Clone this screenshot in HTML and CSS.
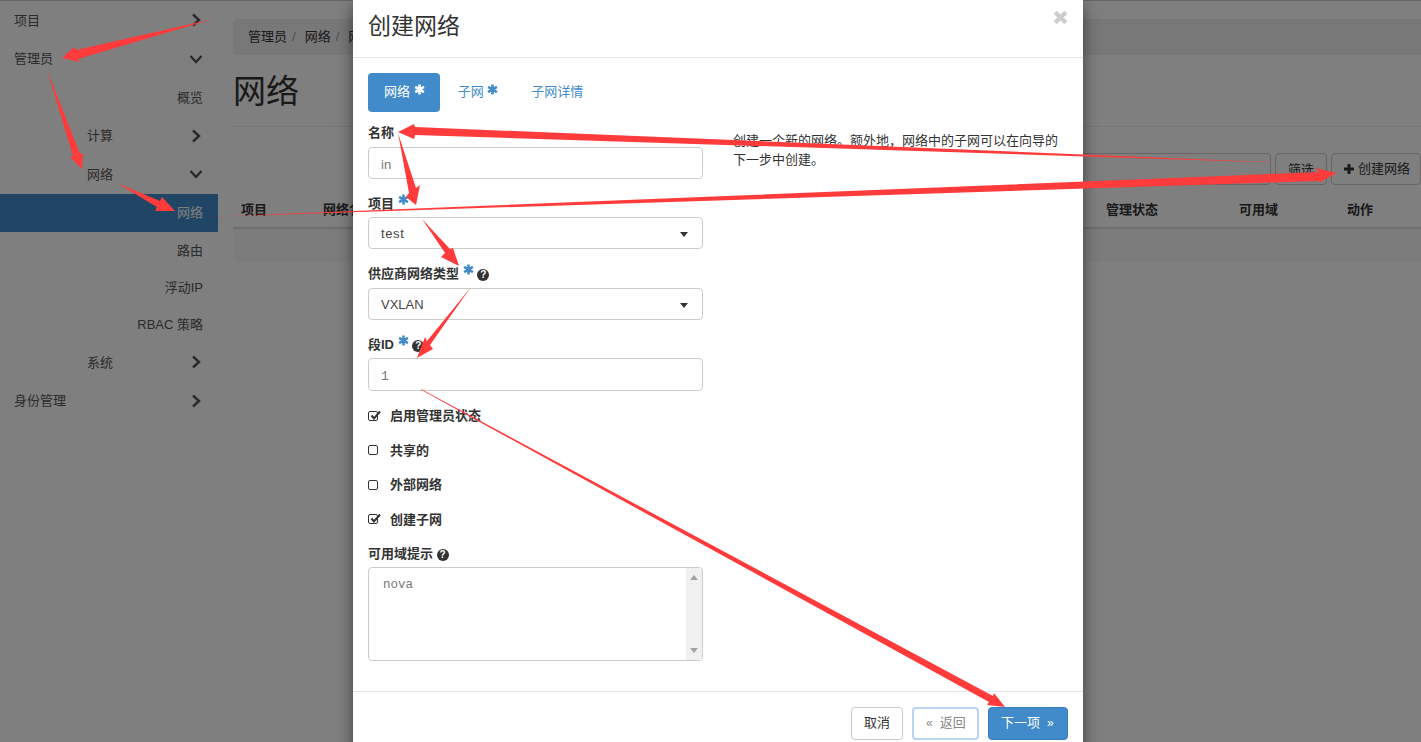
FILE: index.html
```html
<!DOCTYPE html>
<html lang="zh">
<head>
<meta charset="utf-8">
<title>创建网络</title>
<link rel="stylesheet" href="styles.css">
</head>
<body>
<svg width="0" height="0" class="defs">
  <defs>
    <symbol id="star" viewBox="0 0 12 12"><path d="M6 .5v11M1.200 3.200l9.600 5.600M10.800 3.200L1.200 8.800" fill="none" stroke="currentColor" stroke-width="2.800"/></symbol>
    <symbol id="right" viewBox="0 0 12 14"><path d="M3 1.500L9 7l-6 5.500" fill="none" stroke="currentColor" stroke-width="2.400"/></symbol>
    <symbol id="down" viewBox="0 0 14 12"><path d="M1.500 3L7 9l5.500-6" fill="none" stroke="currentColor" stroke-width="2.400"/></symbol>
  </defs>
</svg>
<div class="page">
  <nav class="sidebar">
    <div class="nav-row"><span>项目</span><svg class="chev"><use href="#right"/></svg></div>
    <div class="nav-row"><span>管理员</span><svg class="chev"><use href="#down"/></svg></div>
    <div class="nav-row leaf"><span>概览</span></div>
    <div class="nav-row sub"><span>计算</span><svg class="chev"><use href="#right"/></svg></div>
    <div class="nav-row sub"><span>网络</span><svg class="chev"><use href="#down"/></svg></div>
    <div class="nav-row leaf active"><span>网络</span></div>
    <div class="nav-row leaf tight"><span>路由</span></div>
    <div class="nav-row leaf tight"><span>浮动IP</span></div>
    <div class="nav-row leaf tight"><span>RBAC 策略</span></div>
    <div class="nav-row sub"><span>系统</span><svg class="chev"><use href="#right"/></svg></div>
    <div class="nav-row"><span>身份管理</span><svg class="chev"><use href="#right"/></svg></div>
  </nav>
  <main class="main">
    <div class="crumbs"><span>管理员</span><i>/</i><span>网络</span><i>/</i><span>网络</span></div>
    <h1 class="page-title">网络</h1>
    <div class="toolbar">
      <div class="filter-input"></div>
      <div class="btn-bg">筛选</div>
      <div class="btn-bg create"><svg class="plus" viewBox="0 0 10 10"><path d="M5 0v10M0 5h10" fill="none" stroke="#333" stroke-width="3"/></svg>创建网络</div>
    </div>
    <div class="thead">
      <span>项目</span><span>网络名称</span><span>管理状态</span><span>可用域</span><span>动作</span>
    </div>
    <div class="tbody-row"></div>
  </main>
</div>
<div class="backdrop"></div>
<section class="modal">
  <header class="modal-head">
    <h2>创建网络</h2>
    <svg class="close" viewBox="0 0 14 14"><path d="M2 2l10 10M12 2L2 12" fill="none" stroke="#ccc" stroke-width="4"/></svg>
  </header>
  <div class="modal-body">
    <div class="tabs">
      <div class="tab on">网络 <svg class="star"><use href="#star"/></svg></div>
      <div class="tab">子网 <svg class="star"><use href="#star"/></svg></div>
      <div class="tab">子网详情</div>
    </div>
    <div class="columns">
      <form class="form">
        <div class="group">
          <div class="label">名称</div>
          <input class="field" value="in">
        </div>
        <div class="group">
          <div class="label">项目 <svg class="star"><use href="#star"/></svg></div>
          <div class="field select"><span class="spaced">test</span><i class="caret"></i></div>
        </div>
        <div class="group">
          <div class="label">供应商网络类型 <svg class="star"><use href="#star"/></svg> <span class="help">?</span></div>
          <div class="field select"><span>VXLAN</span><i class="caret"></i></div>
        </div>
        <div class="group">
          <div class="label">段ID <svg class="star"><use href="#star"/></svg> <span class="help">?</span></div>
          <input class="field tall mono" value="1">
        </div>
        <div class="check first"><span class="box"><svg viewBox="0 0 12 12"><path d="M2.500 5.500l2.500 3L11 1.500" fill="none" stroke="#333" stroke-width="2"/></svg></span><span class="check-text">启用管理员状态</span></div>
        <div class="check"><span class="box"></span><span class="check-text">共享的</span></div>
        <div class="check"><span class="box"></span><span class="check-text">外部网络</span></div>
        <div class="check final"><span class="box"><svg viewBox="0 0 12 12"><path d="M2.500 5.500l2.500 3L11 1.500" fill="none" stroke="#333" stroke-width="2"/></svg></span><span class="check-text">创建子网</span></div>
        <div class="group">
          <div class="label">可用域提示 <span class="help">?</span></div>
          <div class="textarea">
            <div class="ta-text">nova</div>
            <div class="scroll"><i class="up"></i><i class="dn"></i></div>
          </div>
        </div>
      </form>
      <p class="desc">创建一个新的网络。额外地&#65292;网络中的子网可以在向导的下一步中创建。</p>
    </div>
  </div>
  <footer class="modal-foot">
    <div class="btn">取消</div>
    <div class="btn back"><small>«</small>返回</div>
    <div class="btn primary">下一项<small>»</small></div>
  </footer>
</section>
<svg class="arrows" viewBox="0 0 1421 742" width="1421" height="742">
  <g fill="#ff3b3b">
    <polygon points="213,19 76,50 74,47 62,58 79,62 78,59"/>
    <polygon points="47,70 73,156 70,157 82,169 83,153 80,154"/>
    <polygon points="117,183 160,201 162,197 175,211 155,211 157,207"/>
    <polygon points="204,217 1319,172 1315,168 1337,173 1318,183 1319,181"/>
    <polygon points="1290,163 415,127 414,124 398,132 414,139 415,135"/>
    <polygon points="398,133 409,193 406,197 416,205 420,185 416,188"/>
    <polygon points="422,219 445,253 441,257 459,266 453,248 450,249"/>
    <polygon points="471,287 427,341 425,337 417,358 433,349 430,345"/>
    <polygon points="421,389 421,389.800 989,702 987,705 1005,707 994,693 993,696"/>
  </g>
</svg>
</body>
</html>
```
FILE: styles.css
```css
* { box-sizing: border-box; }
html, body { margin: 0; height: 742px; overflow: hidden; }
body {
  position: relative;
  background: #fff;
  color: #333;
  font: 13px/18.57px "Liberation Sans", "Noto Sans CJK SC", sans-serif;
}
.defs { position: absolute; }
.page { display: flex; height: 742px; border-top: 1px solid #ccc; }

.sidebar { width: 218px; flex: none; color: #555; }
.nav-row {
  height: 38.500px;
  display: flex;
  align-items: center;
  padding: 0 15px 0 14px;
}
.nav-row span { flex: 1; padding-top: 2px; }
.nav-row.sub { padding-left: 87px; }
.nav-row.leaf span { text-align: right; }
.nav-row.tight { height: 37px; }
.nav-row.active { background: #428bca; color: #fff; }
.chev { width: 14px; height: 14px; flex: none; }

.main { flex: 1; min-width: 0; padding: 18px 0 0 15px; }
.crumbs {
  height: 36px;
  display: flex;
  align-items: center;
  gap: 5px;
  padding-left: 15px;
  background: #f1f1f1;
  border-radius: 4px 0 0 4px;
}
.crumbs i { color: #999; font-style: normal; margin-right: 4px; }
.page-title {
  margin: 17px 0 0;
  height: 55px;
  line-height: 40px;
  font-size: 33px;
  font-weight: 400;
  border-bottom: 1px solid #eee;
}
.toolbar { margin-top: 26px; display: flex; justify-content: flex-end; gap: 4px; height: 32px; }
.filter-input { width: 400px; flex: none; border: 1px solid #ccc; border-radius: 4px; }
.btn-bg {
  border: 1px solid #ccc;
  border-radius: 4px;
  padding: 7px 12px 0;
  white-space: nowrap;
  background: #fff;
}
.create { width: 90px; flex: none; padding-right: 0; padding-top: 0; display: flex; align-items: center; gap: 4px; }
.plus { width: 10px; height: 10px; flex: none; }
.thead {
  margin-top: 7px;
  height: 37px;
  padding-top: 9px;
  display: grid;
  grid-template-columns: 82px 783px 133px 108px 82px;
  border-bottom: 2px solid #ddd;
  font-weight: 700;
}
.thead span { padding-left: 8px; }
.tbody-row { height: 33px; background: #f9f9f9; border-radius: 0 0 0 4px; }

.backdrop { position: absolute; inset: 0; background: rgba(0, 0, 0, .5); }

.modal {
  position: absolute;
  top: 0;
  left: 353px;
  width: 730px;
  background: #fff;
  box-shadow: 0 5px 15px rgba(0, 0, 0, .5);
}
.modal-head {
  height: 58px;
  padding: 0 15px;
  display: flex;
  align-items: flex-start;
  justify-content: space-between;
  border-bottom: 1px solid #e5e5e5;
}
.modal-head h2 { margin: 10px 0 0; font-size: 23px; line-height: 32px; font-weight: 400; }
.close { width: 15px; height: 15px; margin-top: 10px; }
.modal-body { padding: 15px; }
.tabs { display: flex; gap: 2px; height: 39px; color: #428bca; }
.tab { padding: 10px 16px 0; border-radius: 4px; white-space: nowrap; }
.tab.on { background: #428bca; color: #fff; }
.star { width: 11px; height: 11px; vertical-align: top; color: #428bca; }
.tab .star { color: inherit; margin-right: -1px; margin-top: 1px; }
.columns { display: flex; gap: 30px; margin-top: 11px; }
.form { width: 335px; flex: none; }
.desc { margin: 9px 0 0; width: 330px; }
.group { margin-bottom: 15px; }
.label { margin-bottom: 5px; font-weight: 700; height: 18.570px; white-space: nowrap; line-height: 20.570px; }
.help {
  display: inline-block;
  width: 12px;
  height: 12px;
  border-radius: 50%;
  background: #333;
  color: #fff;
  font-size: 10px;
  line-height: 12px;
  text-align: center;
}
.field {
  display: block;
  width: 335px;
  height: 32px;
  padding: 3px 12px 0;
  border: 1px solid #ccc;
  border-radius: 4px;
  background: #fff;
  color: #555;
  font: inherit;
}
input.field { color: #777; outline: none; }
.field.tall { height: 33px; }
.field.mono { font-family: "Liberation Mono", monospace; }
.select { display: flex; align-items: center; justify-content: space-between; color: #444; }
.spaced { letter-spacing: .6px; }
.caret {
  width: 0;
  height: 0;
  border: 4.500px solid transparent;
  border-top: 5px solid #333;
  border-bottom: 0;
  margin-right: 2px;
}
.check {
  display: flex;
  align-items: center;
  height: 18.570px;
  margin-bottom: 16px;
  font-weight: 700;
}
.check-text { padding-top: 2px; }
.check.first { margin-top: 1px; }
.check.final { margin-bottom: 15px; }
.box {
  width: 10px;
  height: 10px;
  margin-right: 12px;
  border: 1px solid #333;
  border-radius: 2px;
  flex: none;
}
.box svg { display: block; width: 12px; height: 12px; margin-top: -2px; overflow: visible; }
.textarea {
  width: 335px;
  height: 94px;
  display: flex;
  border: 1px solid #ccc;
  border-radius: 4px;
  overflow: hidden;
}
.ta-text { flex: 1; padding: 8px 14px; font-family: "Liberation Mono", monospace; font-size: 12.500px; color: #777; }
.scroll {
  width: 16px;
  background: #f0f0f0;
  display: flex;
  flex-direction: column;
  align-items: center;
  justify-content: space-between;
  padding: 7px 0;
}
.up, .dn { width: 0; height: 0; border: 4px solid transparent; }
.up { border-top: 0; border-bottom: 5px solid #a3a3a3; }
.dn { border-bottom: 0; border-top: 5px solid #a3a3a3; }
.modal-foot {
  height: 64px;
  padding: 15px 15px 0;
  display: flex;
  justify-content: flex-end;
  gap: 9px;
  border-top: 1px solid #e5e5e5;
}
.btn {
  height: 33px;
  padding: 6px 12px;
  border: 1px solid #ccc;
  border-radius: 4px;
  white-space: nowrap;
  background: #fff;
  color: #333;
}
.btn small { font-size: 12px; }
.back {
  width: 67px;
  border: 2px solid #b9d3f3;
  color: #888;
  padding-top: 5px;
}
.back small { margin-right: 7px; }
.primary { width: 80px; background: #428bca; border-color: #357ebd; color: #fff; }
.primary small { margin-left: 7px; }
.arrows { position: absolute; inset: 0; pointer-events: none; }
```
